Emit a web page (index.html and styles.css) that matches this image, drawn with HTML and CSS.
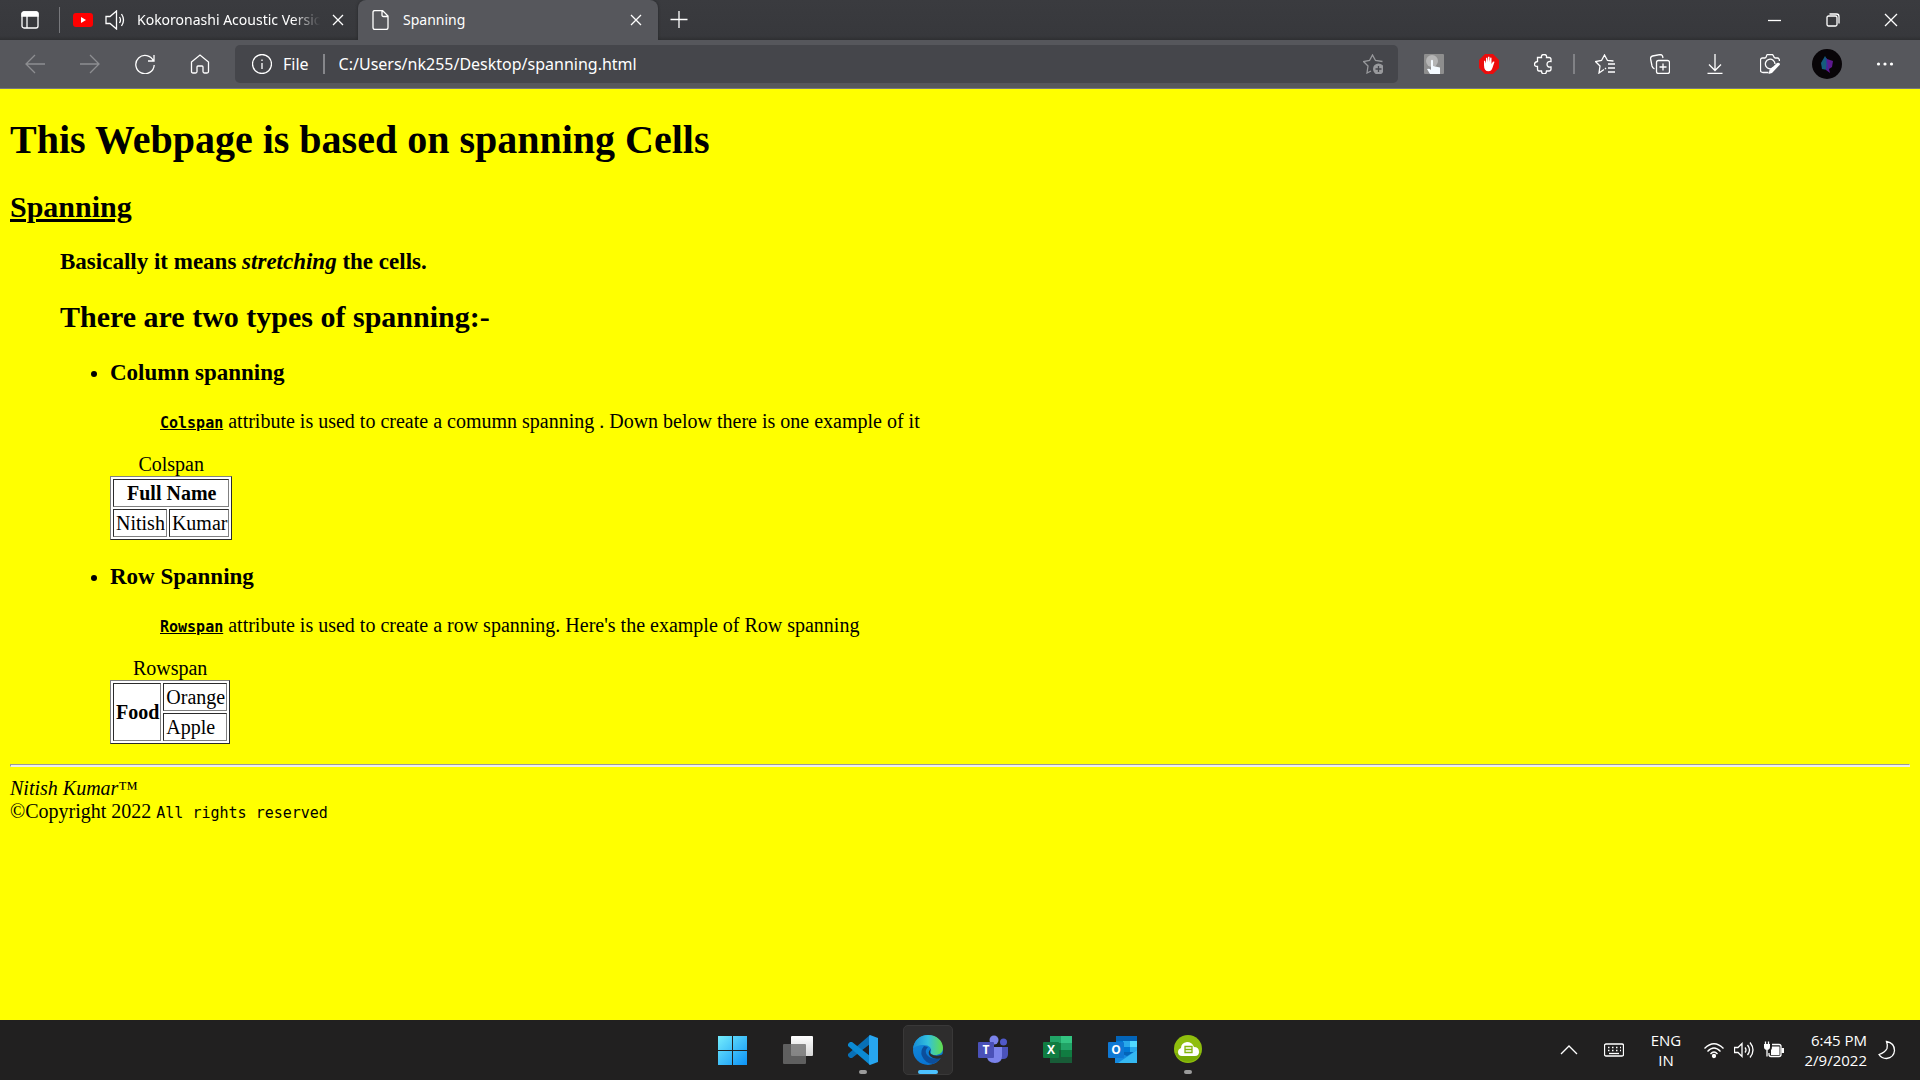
FILE: index.html
```html
<!DOCTYPE html>
<html lang="en">
<head>
<meta charset="utf-8">
<title>Spanning</title>
<link rel="stylesheet" href="styles.css">
</head>
<body>
<header class="browser">
  <div class="tabstrip">
    <button class="tab-actions" aria-label="Tab actions"><svg class="icon" viewBox="0 0 20 20"><rect x="2" y="2" width="16" height="16" rx="2"/><path d="M2 5V4q0-2 2-2h12q2 0 2 2v2H2z" fill="currentColor"/><path d="M7 6v12"/></svg></button>
    <div class="tab">
      <svg class="icon" viewBox="0 0 20 20"><rect y="3" width="20" height="14" rx="3" fill="#f00" stroke="none"/><path d="M8 7l5 3-5 3z" fill="#fff" stroke="none"/></svg>
      <button class="mute" aria-label="Mute tab"><svg class="icon" viewBox="0 0 20 20"><path d="M1 6.500h4L11.500 1v18L5 13.500H1zM14.500 7q2 3 0 6M16.500 4q4 6 0 12"/></svg></button>
      <button class="tab-title tab-title-faded">Kokoronashi Acoustic Version</button>
      <button class="tab-close" aria-label="Close tab"><svg class="icon-small" viewBox="0 0 12 12"><path d="M1 1l10 10M11 1L1 11"/></svg></button>
    </div>
    <div class="tab tab-active">
      <svg class="icon" viewBox="0 0 20 20"><path d="M4 .5h7.500l5.500 5.500v11.500q0 2-2 2H4q-2 0-2-2v-15q0-2 2-2zM11 .5V5q0 1.500 1.500 1.500H17"/></svg>
      <button class="tab-title">Spanning</button>
      <button class="tab-close" aria-label="Close tab"><svg class="icon-small" viewBox="0 0 12 12"><path d="M1 1l10 10M11 1L1 11"/></svg></button>
    </div>
    <button class="new-tab" aria-label="New tab"><svg class="icon" viewBox="0 0 20 20"><path d="M1.500 9.500h17M10 1v17"/></svg></button>
    <div class="window-controls">
      <button aria-label="Minimize"><svg class="icon-window" viewBox="0 0 14 14"><path d="M0 7.500h13"/></svg></button>
      <button aria-label="Restore"><svg class="icon-window" viewBox="0 0 14 14"><rect x="1" y="3" width="10" height="10" rx="1.500"/><path d="M3.500 1h7q2.500 0 2.500 2.500v7"/></svg></button>
      <button aria-label="Close"><svg class="icon-window" viewBox="0 0 14 14"><path d="M1 1l12 12M13 1L1 13"/></svg></button>
    </div>
  </div>
  <div class="toolbar">
    <button class="tool tool-off" aria-label="Back"><svg class="icon" viewBox="0 0 20 20"><path d="M20 10H1M10 1L1 10l9 9"/></svg></button>
    <button class="tool tool-off" aria-label="Forward"><svg class="icon" viewBox="0 0 20 20"><path d="M0 10h19M10 1l9 9-9 9"/></svg></button>
    <button class="tool" aria-label="Refresh"><svg class="icon" viewBox="0 0 20 20"><path d="M18.500 7A9.200 9.200 0 1 0 19.200 11M19 1v6h-6"/></svg></button>
    <button class="tool" aria-label="Home"><svg class="icon" viewBox="0 0 20 20"><path d="M1.500 8L10 1l8.500 7v9.500q0 1.500-1.500 1.500h-2.500q-1.500 0-1.500-1.500V13q0-1-1-1H8q-1 0-1 1v4.500Q7 19 5.500 19H3q-1.500 0-1.500-1.500z"/></svg></button>
    <div class="address">
      <button class="site-info"><svg class="icon" viewBox="0 0 20 20"><circle cx="10" cy="10" r="9.500"/><path d="M10 9v6M10 5.500v1.500"/></svg>File</button>
      <input class="url" type="text" aria-label="Address" value="C:/Users/nk255/Desktop/spanning.html">
      <button class="favorite" aria-label="Add to favorites"><svg class="icon" viewBox="0 0 20 20"><path d="M8 17l-4 2 1-7L.5 7.500l6-1L9.500 1l3 5.500 7 1"/><circle cx="15.500" cy="15" r="5.500" fill="currentColor" stroke="none"/><path d="M12.500 15h6M15.500 12v6" stroke="#45464b"/></svg></button>
    </div>
    <button class="tool" aria-label="Pointer extension"><svg class="icon" viewBox="0 0 20 20" stroke="none"><g stroke="none"><rect width="20" height="20" rx="1" fill="#8e8e8e"/><circle cx="8" cy="7" r="6" fill="#b5b5b5"/><path d="M7 6.500q1-1.500 2 0V12l7 1.500V20H6l-3-5q2-1 4 1z" fill="#f4faff"/></g></svg></button>
    <button class="tool" aria-label="Ad blocker"><svg class="icon" viewBox="0 0 20 20"><g stroke="none"><path d="M6 0h8l6 6v8l-6 6H6l-6-6V6z" fill="#eb0c0c"/><path d="M5 7l1-.5 1 3V4l1.200-.5L9 8V2.800h1.500V8l.8-4.500 1.200.3V10l1.500-2.500 1.500.3-2 6q-1 3.500-4 3.500-4.500 0-4.500-6z" fill="#fff"/></g></svg></button>
    <button class="tool" aria-label="Extensions"><svg class="icon" viewBox="0 0 20 20"><path d="M3.500 3.500h4q-.5-3 2.500-3t2.500 3H15q2 0 2 2v2q-4-.5-4 2.800t4 2.700V15q0 2-2 2h-2.500q0 3-2.500 3t-2.500-3H5q-1.500 0-1.500-2v-2.500q-3 0-3-2.300t3-2.700z"/></svg></button>
    <span class="divider"></span>
    <button class="tool" aria-label="Favorites"><svg class="icon" viewBox="0 0 20 20"><path d="M9 15.500L4 19l1-7L.5 7.500l6-1L9.500 1l3 5.500 6 .5M13 10h7M13 14h7M13 18h7M11 14l-1 1"/></svg></button>
    <button class="tool" aria-label="Collections"><svg class="icon" viewBox="0 0 20 20"><rect x="6.500" y="6.500" width="13" height="13" rx="2"/><path d="M9.500 13h7M13 9.500v7M4.500 15Q2.500 14 2 12L.5 4.500q0-2 2-2.500L10 .5q2 0 2.500 1.500l.5 2"/></svg></button>
    <button class="tool" aria-label="Downloads"><svg class="icon" viewBox="0 0 20 20"><path d="M10 0v16M4 10.500l6 6 6-6M2.500 19.500h15"/></svg></button>
    <button class="tool" aria-label="Web capture"><svg class="icon" viewBox="0 0 20 20"><path d="M8.500 18.500H3q-2.500 0-2.500-2.500V6Q.5 4 2.500 4H5q1 0 1.500-2T8 .5h4q1 0 1.500 1.500T15 4h2.500q2 0 2 3M13.500 13.500a4.800 4.800 0 1 1 1.500-3.500"/><path d="M17 9q3-1 3 1.500L12 19l-3.500 1 1-4z" fill="currentColor" stroke="none"/></svg></button>
    <button class="profile" aria-label="Profile"><svg class="avatar" viewBox="0 0 30 30"><circle cx="15" cy="15" r="15" fill="#080508"/><path d="M13 7l-4 7 1 6 5 1 1-9z" fill="#155c7c"/><path d="M15 10l6 2-1 6-3 2 1 4-4-3z" fill="#5d198e"/><path d="M14 9l2 12" stroke="#2b37a0"/></svg></button>
    <button class="tool" aria-label="Settings and more"><svg class="icon" viewBox="0 0 20 20"><g fill="currentColor" stroke="none"><circle cx="3.500" cy="10" r="1.600"/><circle cx="10" cy="10" r="1.600"/><circle cx="16.500" cy="10" r="1.600"/></g></svg></button>
  </div>
</header>

<main class="page">
  <h1>This Webpage is based on spanning Cells</h1>
  <h2><u>Spanning</u></h2>
  <div class="indent">
    <h3>Basically it means <em>stretching</em> the cells.</h3>
    <h2>There are two types of spanning:-</h2>
    <ul>
      <li>
        <h3>Column spanning</h3>
        <p><code class="attribute">Colspan</code> attribute is used to create a comumn spanning . Down below there is one example of it</p>
        <table>
          <caption>Colspan</caption>
          <tr><th colspan="2">Full Name</th></tr>
          <tr><td>Nitish</td><td>Kumar</td></tr>
        </table>
      </li>
      <li>
        <h3>Row Spanning</h3>
        <p><code class="attribute">Rowspan</code> attribute is used to create a row spanning. Here's the example of Row spanning</p>
        <table>
          <caption>Rowspan</caption>
          <tr><th rowspan="2">Food</th><td>Orange</td></tr>
          <tr><td>Apple</td></tr>
        </table>
      </li>
    </ul>
  </div>
  <hr>
  <footer><em>Nitish Kumar</em>™<br>©Copyright 2022 <code>All rights reserved</code></footer>
</main>

<nav class="taskbar" aria-label="Taskbar">
  <div class="apps">
    <button class="app" aria-label="Start"><svg class="app-icon" viewBox="1 0 30 30"><defs><linearGradient id="win" x1="0" y1="0" x2="30" y2="30" gradientUnits="userSpaceOnUse"><stop stop-color="#78f0fc"/><stop offset="1" stop-color="#0c92f6"/></linearGradient></defs><path d="M1 1h14v14H1zM16 1h14v14H16zM1 16h14v14H1zM16 16h14v14H16z" fill="url(#win)"/></svg></button>
    <button class="app" aria-label="Task view"><svg class="app-icon" viewBox="0 0 30 30"><defs><linearGradient id="tv" x2="0" y2="1"><stop stop-color="#fff"/><stop offset="1" stop-color="#d5d5d5"/></linearGradient></defs><rect x="8" y="1" width="22" height="20" rx="1" fill="url(#tv)"/><rect x="0" y="9" width="23" height="20" rx="1" fill="#6f6f6f" opacity=".8"/></svg></button>
    <button class="app app-running" aria-label="Visual Studio Code"><svg class="app-icon" viewBox="0 0 30 30"><path d="M22 0L0 19v2l2 2h2L22 9z" fill="#0870b6"/><path d="M22 30L0 11V9l2-2h2l18 14z" fill="#0b8ad3"/><path d="M22 0l8 3v24l-8 3q-1 0-1-2V2q0-2 1-2z" fill="#27a6f1"/></svg></button>
    <button class="app app-current" aria-label="Microsoft Edge"><svg class="app-icon" viewBox="0 0 30 30"><defs><linearGradient id="edge-top"><stop stop-color="#168bd8"/><stop offset=".5" stop-color="#33c1dd"/><stop offset="1" stop-color="#63df48"/></linearGradient><linearGradient id="edge-side" x2=".4" y2="1"><stop stop-color="#178ed9"/><stop offset="1" stop-color="#0874d2"/></linearGradient></defs><circle cx="15" cy="15" r="15" fill="url(#edge-side)"/><path d="M0 14C1 5 7 0 15 0c9 0 15 6 15 13 0 5-4 7-8 7-3 0-5-1-4-3 1-4-2-7-7-7-6 0-10 2-11 4z" fill="url(#edge-top)"/><path d="M11 11q-4 5-2 10 3 7 11 8 5-2 8-7-9 4-14-2-3-4 1-8z" fill="#0c4e9b"/><path d="M18 14q-2 3 0 5 4 3 10 1l2-1v3l-2 1q-7 2-11-2-3-4 1-7z" fill="#2d2d2d"/></svg></button>
    <button class="app" aria-label="Microsoft Teams"><svg class="app-icon" viewBox="0 0 30 30"><circle cx="25.500" cy="7" r="3.500" fill="#5059c9"/><path d="M20 12h10v7q0 5-5 5h-5z" fill="#4b53bc"/><circle cx="16" cy="5" r="4.500" fill="#7b83eb"/><path d="M9 12h15v9q0 7-7 7-8 0-8-7z" fill="#7b83eb"/><rect y="7" width="16" height="16" rx="1" fill="#4a51b8"/><text x="8" y="19" class="badge-letter">T</text></svg></button>
    <button class="app" aria-label="Excel"><svg class="app-icon" viewBox="0 0 30 30"><path d="M8 1h21v27H7V2z" fill="#185c37"/><path d="M7 1h11v7H7z" fill="#21a366"/><path d="M18 1h11v7H18z" fill="#33c481"/><path d="M7 8h11v7H7z" fill="#107c41"/><path d="M18 8h11v7H18z" fill="#21a366"/><path d="M18 15h11v7H18z" fill="#107c41"/><rect y="7" width="16" height="16" rx="1" fill="#107c41"/><text x="8" y="19" class="badge-letter">X</text></svg></button>
    <button class="app" aria-label="Outlook"><svg class="app-icon" viewBox="0 0 30 30"><path d="M8 1h21v22H8z" fill="#0364b8"/><path d="M8 6h14v11H8z" fill="#0078d4"/><path d="M15 6h7v6h-7z" fill="#28a8ea"/><path d="M22 6h7v6h-7z" fill="#50d9ff"/><path d="M22 12h7v5h-7z" fill="#28a8ea"/><path d="M7 16l12 5 10-6v13H7z" fill="#1489df"/><path d="M29 15v13H10z" fill="#35b8f1"/><rect y="7" width="16" height="16" rx="1" fill="#0f78d4"/><text x="8" y="19" class="badge-letter">O</text></svg></button>
    <button class="app app-running" aria-label="Cloud storage"><svg class="app-icon" viewBox="0 0 30 30"><circle cx="15" cy="14" r="14" fill="#8fbe0d"/><path d="M2 18a14 14 0 0 0 26 0z" fill="#79ac05"/><path d="M9 21q-4 0-4-4 0-3 3-4 0-5 6-6 5 0 7 5 5 0 5 5 0 4-4 4z" fill="#fff"/><path d="M12 11.500h7v6h-7zM12 14.500h7" fill="none" stroke="#83b50a" stroke-width="1.300"/></svg></button>
  </div>
  <div class="tray">
    <button class="tray-item" aria-label="Show hidden icons"><svg class="icon" viewBox="0 0 20 20"><path d="M2 14l8-8 8 8"/></svg></button>
    <button class="tray-item" aria-label="Touch keyboard"><svg class="icon" viewBox="0 0 20 20"><rect x=".5" y="4" width="19" height="12" rx="1.500"/><path d="M4 7.500h13M4 10.500h13" stroke-dasharray="1.500 2.500"/><path d="M5 13.500h10"/></svg></button>
    <button class="language">ENG<br>IN</button>
    <button class="status" aria-label="Network, volume and battery">
      <svg class="icon" viewBox="0 0 20 20"><path d="M.5 8.500q9.500-9.500 19 0M3.500 11.500q6.500-7 13 0M6.500 14q3.500-4 7 0"/><circle cx="10" cy="16" r="1.500" fill="currentColor"/></svg>
      <svg class="icon" viewBox="0 0 20 20"><path d="M.5 7.500h3.500l4-4v13l-4-4H.5zM11 7.500q2 2.500 0 5M13.500 5q4 5 0 10M16 2.500q6 7.500 0 15"/></svg>
      <svg class="icon" viewBox="0 0 20 20"><path d="M8 4.500h7q2 0 2 2v8q0 2-2 2H7q-2 0-2-2V13M3 10v6.500M1.500 1.500v3M4.500 1.500v3"/><path d="M0 4h6v3q0 2.500-3 3-3-.5-3-3zM8 6.500h7.500v8.500H7v-5q1-1 1-3.500zM17.500 8h2.500v5h-2.500z" fill="currentColor" stroke="none"/></svg>
    </button>
    <button class="clock">6:45 PM<br>2/9/2022</button>
    <button class="moon" aria-label="Focus assist"><svg class="icon" viewBox="0 0 20 20"><path d="M9.500 1.500q8 1.500 8 9-.5 7-8 8-5 0-7.500-4 6-2 8-6 1-3-.5-7z"/></svg></button>
  </div>
</nav>
</body>
</html>
```
FILE: styles.css
```css
* { box-sizing: border-box; }

body {
  margin: 0;
  min-height: 100vh;
  display: flex;
  flex-direction: column;
  background: #ffff00;
  color: #000;
  font-family: "Liberation Serif", "Times New Roman", serif;
  font-size: 20px;
  line-height: 23px;
}

button {
  display: flex;
  align-items: center;
  justify-content: center;
  margin: 0;
  padding: 0;
  border: 0;
  background: none;
  color: inherit;
  font: inherit;
  flex: none;
}

svg { display: block; flex: none; }
.icon, .icon-small, .icon-window { fill: none; stroke: currentColor; stroke-width: 1.3; }
.icon { width: 20px; height: 20px; }
.icon-small { width: 12px; height: 12px; }
.icon-window { width: 14px; height: 14px; }

/* Browser frame */
.browser {
  background: #56575c;
  border-bottom: 1px solid #77787c;
  color: #fff;
  font-family: "Noto Sans", "Open Sans", sans-serif;
  font-size: 14px;
  line-height: 20px;
}
.tabstrip {
  display: flex;
  height: 40px;
  background: linear-gradient(#3a3b3f, #37383c 90%, #2e2f32);
}
.tab-actions { width: 60px; border-right: 1px solid; border-image: linear-gradient(transparent 20%, #77787c 20%, #77787c 80%, transparent 80%) 1; }
.tab {
  display: flex;
  align-items: center;
  width: 298px;
  padding: 0 10px 0 13px;
}
.tab-active {
  width: 300px;
  padding-right: 12px;
  background: #56575c;
  border-radius: 8px 8px 0 0;
  box-shadow: 0 0 3px #242528;
  clip-path: inset(0 -4px 0 -4px);
}
.mute { padding: 0 12px; }
.tab-title { flex: 1; min-width: 0; overflow: hidden; justify-content: flex-start; white-space: nowrap; }
.tab-title-faded { mask-image: linear-gradient(to right, #000 85%, transparent); }
.tab-active .tab-title { padding-left: 12px; }
.tab-close { width: 20px; height: 20px; margin-left: 8px; }
.new-tab { width: 42px; }
.window-controls { display: flex; margin-left: auto; }
.window-controls button { width: 58px; }

.toolbar {
  display: flex;
  align-items: center;
  height: 48px;
  padding: 0 8px 1px 7px;
}
.tool { width: 55px; height: 38px; }
.tool-off { color: #8d8e91; }
.address {
  display: flex;
  align-items: center;
  flex: 1;
  min-width: 0;
  height: 38px;
  margin: 0 8px;
  padding: 0 15px 0 17px;
  border-radius: 5px;
  background: #45464b;
  font-size: 16px;
}
.site-info { gap: 11px; padding-right: 14px; border-right: 2px solid #86878b; height: 20px; }
.url {
  flex: 1;
  min-width: 0;
  padding: 0 0 0 14px;
  border: 0;
  outline: 0;
  background: none;
  color: #fff;
  font: inherit;
}
.favorite { color: #98999c; }
.divider { width: 2px; height: 20px; margin: 0 2px; background: #818286; }
.profile { width: 60px; }
.avatar { width: 30px; height: 30px; }

/* Document */
.page { flex: 1; padding: 28px 10px 10px; }
.page h1 { margin: 0 0 27px; font-size: 40px; line-height: 46px; }
.page h2 { margin: 25px 0 24px; font-size: 30px; line-height: 34px; }
.page h3 { margin: 23px 0 24px; font-size: 23px; line-height: 27px; }
.indent { margin-left: 50px; }
.page ul { margin: 25px 0 20px; padding-left: 50px; }
.page p { margin: 20px 50px; }
.page code { font-family: "DejaVu Sans Mono", monospace; font-size: 15px; line-height: 20px; }
.page .attribute { font-weight: bold; text-decoration: underline; }
table { border: 1px solid; border-color: #808080 #2b2b2b #2b2b2b #808080; border-spacing: 2px; background: #fff; }
caption { white-space: nowrap; }
th, td { height: 28px; padding: 1px 1px 1px 2px; border: 1px solid; border-color: #2b2b2b #808080 #808080 #2b2b2b; }
hr { height: 3px; margin: 20px 0 10px; border: 1px solid; border-color: #9a9a9a #eee #eee #9a9a9a; background: #eee; }

/* Taskbar */
.taskbar {
  display: grid;
  grid-template-columns: 1fr auto 1fr;
  align-items: center;
  height: 60px;
  background: #212020;
  color: #fff;
  font-family: "Open Sans", "Noto Sans", sans-serif;
  font-size: 15px;
  line-height: 20px;
}
.apps { grid-column: 2; display: flex; gap: 15px; }
.app { position: relative; width: 50px; height: 50px; border-radius: 5px; }
.app-icon { width: 30px; height: 30px; }
.badge-letter { fill: #fff; font: bold 12px "Open Sans", sans-serif; text-anchor: middle; }
.app-current { background: #2e2d2d; border: 1px solid #393838; }
.app-running::after, .app-current::after {
  content: "";
  position: absolute;
  bottom: 1px;
  left: 50%;
  width: 8px;
  height: 4px;
  border-radius: 2px;
  background: #9b9b9b;
  transform: translateX(-50%);
}
.app-current::after { bottom: 0; width: 20px; background: #4cc2ff; }
.tray { display: flex; justify-content: flex-end; align-items: center; padding-right: 23px; }
.tray-item { width: 45px; height: 50px; }
.language { width: 60px; }
.status { gap: 10px; padding: 0 8px; }
.clock { width: 75px; justify-content: flex-end; text-align: right; }
.moon { margin-left: 10px; }
```
